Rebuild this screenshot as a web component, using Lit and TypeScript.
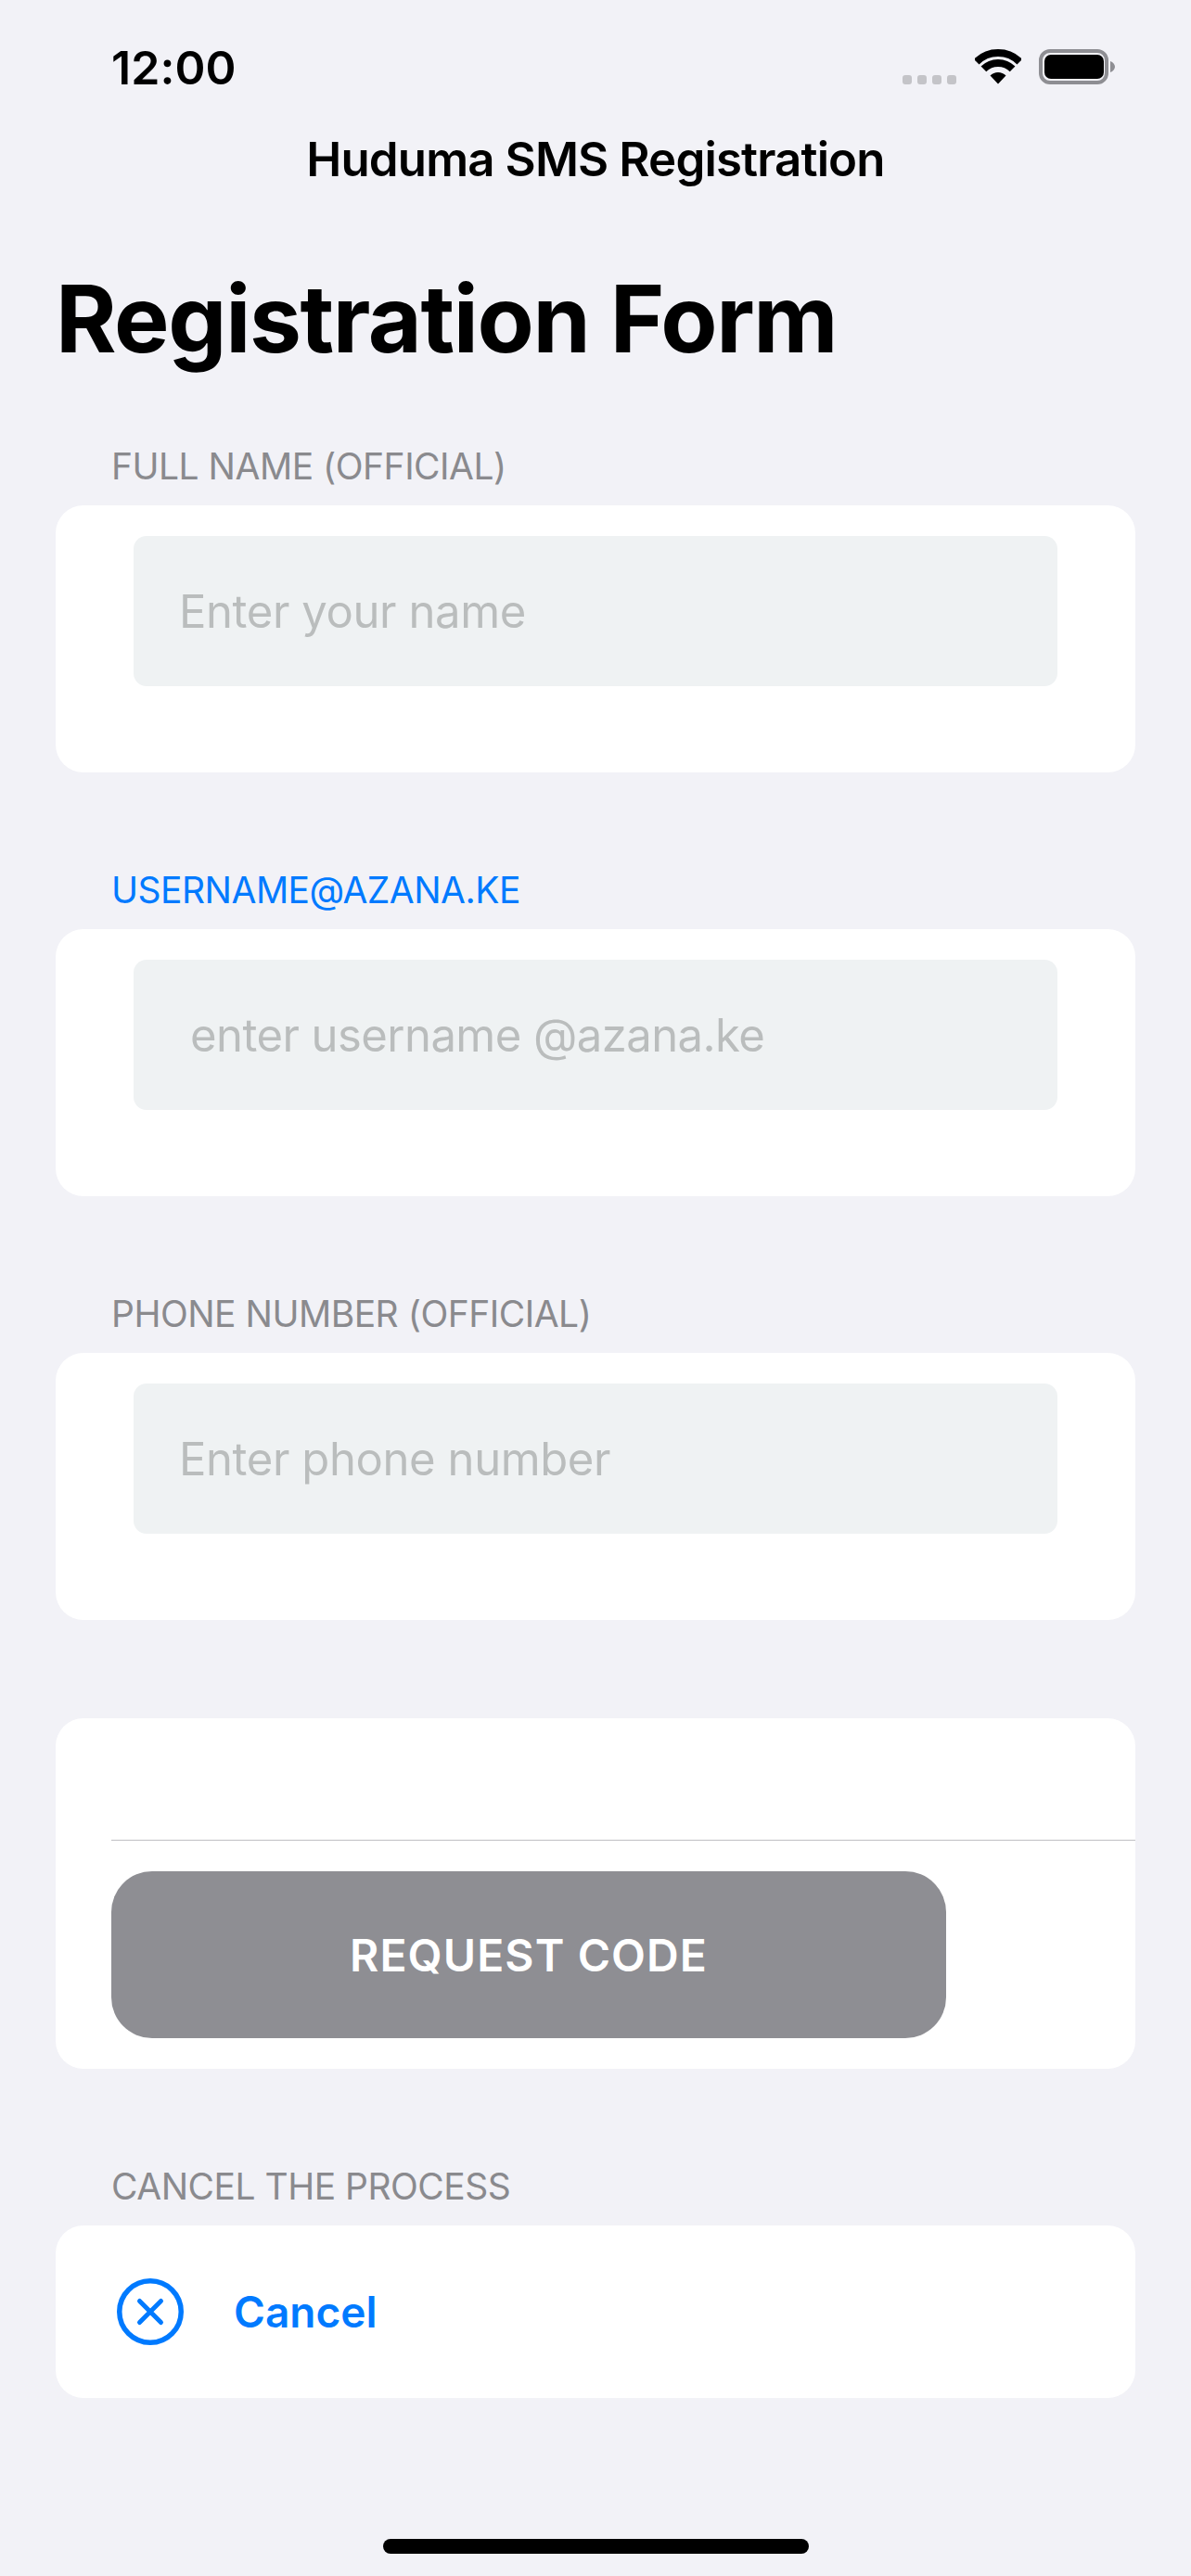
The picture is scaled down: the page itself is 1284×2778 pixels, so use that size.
import { LitElement, html, css } from "lit";
import { customElement } from "lit/decorators.js";

@customElement("app-root")
export class AppRoot extends LitElement {
  static styles = css`
    :host { display: block; width: 1284px; font-family: Inter, "Noto Sans", sans-serif; }
    * { box-sizing: border-box; }
    .page { height: 2778px; background: #f2f2f7; display: flex; flex-direction: column; overflow: hidden; }
    .status { height: 142px; flex: none; padding: 0 82px 0 120px; display: flex; justify-content: space-between; }
    .time { margin-top: 43px; font-size: 50px; line-height: 60px; font-weight: 600; color: #000; letter-spacing: 0.1px; }
    .sys { margin-top: 53px; height: 40px; display: flex; align-items: flex-start; }
    .dots { display: flex; gap: 6px; margin-top: 28px; margin-right: 20px; }
    .dots i { width: 10px; height: 10px; border-radius: 3px; background: #c4c4c8; }
    .wifi { width: 50px; height: 38px; margin-right: 19px; }
    .batt { width: 82px; height: 38px; }
    .title { flex: none; height: 60px; line-height: 60px; text-align: center; font-size: 51px; font-weight: 600; color: #000; letter-spacing: -0.87px; }
    .large { flex: none; margin: 82px 0 0 60px; height: 120px; line-height: 120px; font-size: 100px; font-weight: 700; color: #000; letter-spacing: -1.35px; }
    .body { flex: none; padding: 74px 60px 0; display: flex; flex-direction: column; }
    .label { height: 50px; line-height: 50px; padding-left: 60px; margin-bottom: 17px; font-size: 39px; color: #8a8a8e; letter-spacing: -0.5px; }
    .label.blue { color: #007aff; }
    .card { background: #fff; border-radius: 30px; }
    .field { height: 288px; padding: 33px 84px 0; margin-bottom: 102px; }
    input { display: block; width: 100%; height: 162px; border: 0; outline: 0; border-radius: 14px; background: #eff2f3; padding: 0 49px; font: 400 49px Inter, sans-serif; letter-spacing: -0.4px; }
    input.wide { padding-left: 61px; letter-spacing: -0.55px; }
    input::placeholder { color: #babdbd; opacity: 1; }
    .action { height: 378px; padding: 131px 0 0 60px; margin-top: 4px; margin-bottom: 102px; }
    .rule { height: 1px; background: #c0c0c4; }
    .request { display: block; width: 900px; height: 180px; margin-top: 33px; border: 0; border-radius: 44px; background: #8e8e93; color: #fff; font: 600 48px Inter, sans-serif; letter-spacing: 1.1px; padding: 0; }
    .cancel { height: 186px; display: flex; align-items: center; padding-left: 66px; }
    .cancel svg { width: 72px; height: 72px; flex: none; }
    .cancel button { margin-left: 54px; border: 0; background: none; padding: 0; color: #007aff; font: 600 46px Inter, sans-serif; }
    .home { align-self: center; width: 459px; height: 16px; border-radius: 8px; background: #000; margin-top: auto; margin-bottom: 24px; }
  `;

  private field(label: string, placeholder: string, blue = false, wide = false) {
    return html`
      <div class="label ${blue ? "blue" : ""}">${label}</div>
      <div class="card field"><input class="${wide ? "wide" : ""}" placeholder=${placeholder} /></div>
    `;
  }

  render() {
    return html`
      <div class="page">
        <div class="status">
          <div class="time">12:00</div>
          <div class="sys">
            <div class="dots"><i></i><i></i><i></i><i></i></div>
            <svg class="wifi" viewBox="0 0 50 38">
              <path d="M1.7 13.7A33 33 0 0 1 48.3 13.7" fill="none" stroke="#000" stroke-width="8" />
              <path d="M9.4 21.4A22 22 0 0 1 40.6 21.4" fill="none" stroke="#000" stroke-width="8" />
              <path d="M25 37.5L16.5 28.5A12 12 0 0 1 33.5 28.5Z" fill="#000" />
            </svg>
            <svg class="batt" viewBox="0 0 82 38">
              <rect x="2" y="2" width="71" height="34" rx="10" fill="none" stroke="#8e8e93" stroke-width="4" />
              <rect x="6" y="6" width="64" height="26" rx="7" fill="#000" />
              <path d="M77 13C80 14 82 16.500 82 19C82 21.500 80 24 77 25Z" fill="#8e8e93" />
            </svg>
          </div>
        </div>
        <div class="title">Huduma SMS Registration</div>
        <div class="large">Registration Form</div>
        <div class="body">
          ${this.field("FULL NAME (OFFICIAL)", "Enter your name")}
          ${this.field("USERNAME@AZANA.KE", "enter username @azana.ke", true, true)}
          ${this.field("PHONE NUMBER (OFFICIAL)", "Enter phone number")}
          <div class="card action">
            <div class="rule"></div>
            <button class="request">REQUEST CODE</button>
          </div>
          <div class="label">CANCEL THE PROCESS</div>
          <div class="card cancel">
            <svg viewBox="0 0 72 72" fill="none" stroke="#007aff" stroke-linecap="round">
              <circle cx="36" cy="36" r="33.250" stroke-width="5.500" />
              <path d="M24.500 24.500L47.500 47.500M47.500 24.500L24.500 47.500" stroke-width="5" />
            </svg>
            <button>Cancel</button>
          </div>
        </div>
        <div class="home"></div>
      </div>
    `;
  }
}
